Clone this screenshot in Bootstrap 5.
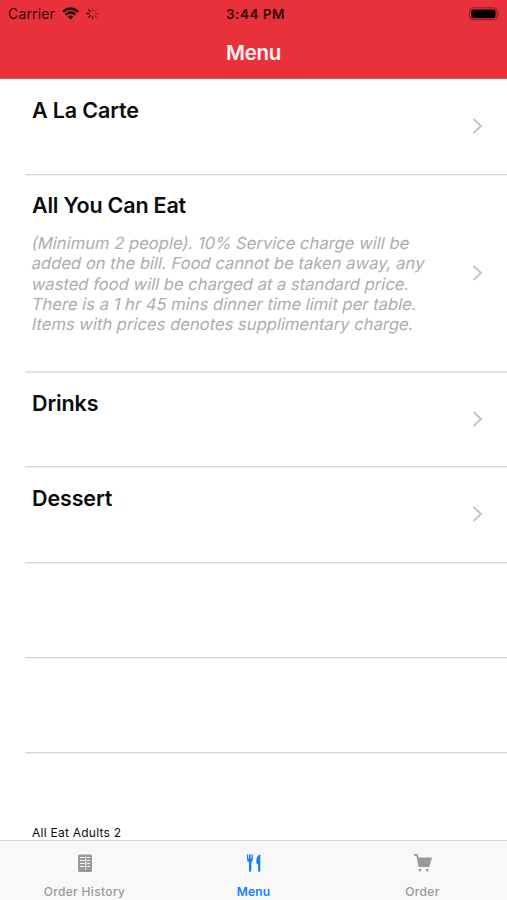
<!DOCTYPE html>
<html lang="en">
<head>
<meta charset="utf-8">
<meta name="viewport" content="width=device-width, initial-scale=1">
<title>Menu</title>
<link href="https://cdn.jsdelivr.net/npm/bootstrap@5.3.0/dist/css/bootstrap.min.css" rel="stylesheet">
<style>
body{font-family:Inter,"Liberation Sans",sans-serif;height:900px;overflow:hidden;background:#fff;color:#0c0c0c}
.top-area{background:#e8313a;height:79px;border-bottom:1px solid #e2545b}
.status{height:27px;font-size:14px;line-height:27px;color:#2b0709;padding:0 6px 0 8px}
.status > *{flex:1 1 0}
.carrier{letter-spacing:.15px}
.clock{font-weight:600;letter-spacing:.5px;font-size:13.5px;padding:1px 0 0 2px}
.page-title{font-size:20.5px;font-weight:600;line-height:51px;color:#fff1f1;letter-spacing:-.3px}
.entry{margin-left:25px;padding:0 24px 0 7px;height:95.3px;border-bottom:1px solid #d6d6d8;box-shadow:0 1px #f0f0f1}
.entry.first{height:96px}
.entry.tall{height:197px;border-bottom-color:#e2e2e3;box-shadow:0 1px #e6e6e7}
.entry h2{font-size:21.5px;font-weight:600;line-height:26px;margin:18px 0 0;letter-spacing:-.13px}
.entry.tall h2{margin-top:17px;letter-spacing:-.2px}
.entry svg{margin-top:-1px}
.entry p{font-size:16.6px;line-height:20.35px;color:#adadad;margin:15px 0 0;white-space:nowrap}
.entry p span{display:table;transform:skewX(-12deg)}
.summary{font-size:12px;line-height:14px;padding-left:32px;letter-spacing:.25px;margin-bottom:0}
.tabs{height:60px;background:#f8f8f8;border-top:1px solid #d6d6d6;font-size:12px;font-weight:500;letter-spacing:.33px;color:#999}
.tabs a{flex:1 1 0;color:inherit;text-decoration:none;padding-top:12px}
.tabs a.active{color:#147efb;font-weight:600;letter-spacing:.2px}
.tabs svg{display:block;margin-bottom:11px}
.tabs span{line-height:16px}
</style>
<script src="https://cdn.jsdelivr.net/npm/bootstrap@5.3.0/dist/js/bootstrap.bundle.min.js"></script>
</head>
<body class="d-flex flex-column">
<header class="top-area flex-shrink-0">
  <div class="status d-flex align-items-center">
    <div class="d-flex align-items-center"><span class="carrier">Carrier</span>
      <svg style="margin-left:7px" width="17" height="13" viewBox="0 0 17 13" fill="none" stroke="#1c0304" stroke-width="2.3"><path d="M1 4.6Q8.500-1.700 16 4.600M3.700 7.500Q8.500 3.500 13.300 7.500"/><path d="M8.500 12.400 5.800 9.600Q8.500 7.500 11.200 9.600Z" fill="#1c0304" stroke="none"/></svg>
      <svg style="margin-left:7px" width="13" height="13" viewBox="-6.500 -6.500 13 13" stroke="#3a080b" stroke-width="1.300" stroke-linecap="round"><path d="M0-3V-5.500" opacity=".35"/><path d="M2.100-2.100 3.900-3.900" opacity=".3"/><path d="M3 0H5.500" opacity=".35"/><path d="M2.100 2.100 3.900 3.900" opacity=".45"/><path d="M0 3V5.500" opacity=".65"/><path d="M-2.100 2.100-3.900 3.900M-3 0H-5.500M-2.100-2.100-3.900-3.900"/></svg>
    </div>
    <div class="clock text-center">3:44 PM</div>
    <div class="d-flex justify-content-end">
      <svg width="33" height="14" viewBox="0 0 33 14"><rect x="1.500" y=".8" width="27.500" height="12" rx="3.200" fill="none" stroke="#8e1c22"/><rect x="3.200" y="2.500" width="24.300" height="8.800" rx="1.800" fill="#050000"/><path d="M30.300 4.800q2 1.900 0 4z" fill="#8e1c22"/></svg>
    </div>
  </div>
  <h1 class="page-title text-center m-0">Menu</h1>
</header>
<main class="flex-grow-1 overflow-hidden d-flex flex-column">
  <div class="entry first d-flex justify-content-between flex-shrink-0"><h2>A La Carte</h2><svg class="align-self-center" width="11" height="16" viewBox="0 0 11 16" fill="none" stroke="#c5c5c9" stroke-width="2"><path d="M1.500 1 9 8 1.500 15"/></svg></div>
  <div class="entry tall d-flex justify-content-between flex-shrink-0"><div><h2>All You Can Eat</h2><p><span>(Minimum 2 people). 10% Service charge will be</span><span>added on the bill. Food cannot be taken away, any</span><span>wasted food will be charged at a standard price.</span><span>There is a 1 hr 45 mins dinner time limit per table.</span><span>Items with prices denotes supplimentary charge.</span></p></div><svg class="align-self-center" width="11" height="16" viewBox="0 0 11 16" fill="none" stroke="#c5c5c9" stroke-width="2"><path d="M1.500 1 9 8 1.500 15"/></svg></div>
  <div class="entry d-flex justify-content-between flex-shrink-0"><h2>Drinks</h2><svg class="align-self-center" width="11" height="16" viewBox="0 0 11 16" fill="none" stroke="#c5c5c9" stroke-width="2"><path d="M1.500 1 9 8 1.500 15"/></svg></div>
  <div class="entry d-flex justify-content-between flex-shrink-0"><h2>Dessert</h2><svg class="align-self-center" width="11" height="16" viewBox="0 0 11 16" fill="none" stroke="#c5c5c9" stroke-width="2"><path d="M1.500 1 9 8 1.500 15"/></svg></div>
  <div class="entry flex-shrink-0"></div>
  <div class="entry flex-shrink-0"></div>
  <p class="summary mt-auto">All Eat Adults 2</p>
</main>
<nav class="tabs d-flex flex-shrink-0">
  <a href="#" class="d-flex flex-column align-items-center">
    <svg width="16" height="20" viewBox="0 0 16 20"><rect x="1" y="1.500" width="14" height="17.500" rx="1.500" fill="#999"/><path d="M3 4.500H7.500M3 7.500H7.500M3 10.500H7.500M3 13.500H7.500M10 4.500H13M10 7.500H13M10 10.500H13M10 13.500H13M8.700 3.500V16.500" stroke="#f8f8f8" stroke-width="1"/></svg>
    <span>Order History</span></a>
  <a href="#" class="active d-flex flex-column align-items-center">
    <svg width="16" height="20" viewBox="0 0 16 20" fill="#147efb"><path d="M1 1.500H2.200V5.500H3V1.500H4.700V5.500H5.500V1.500H6.800V6.500Q6.800 8.500 5.300 9V17.500Q5.300 18.700 4.200 18.700 3 18.700 3 17.500V9Q1 8.500 1 6.500Z"/><path d="M14.300 1.300V17.500Q14.300 18.700 13.200 18.700 12.100 18.700 12.100 17.500V11.500L10.300 10Q10 2.500 14.300 1.300Z"/></svg>
    <span>Menu</span></a>
  <a href="#" class="d-flex flex-column align-items-center">
    <svg width="20" height="20" viewBox="0 0 20 20" fill="#999"><path d="M1 1H4.500L5.400 4.500H19L16.300 14H5.600L3.300 2.800H1ZM7 15.700A1.400 1.400 0 1 1 6.900 15.700ZM14.300 15.700A1.400 1.400 0 1 1 14.200 15.700Z"/></svg>
    <span>Order</span></a>
</nav>
</body>
</html>
